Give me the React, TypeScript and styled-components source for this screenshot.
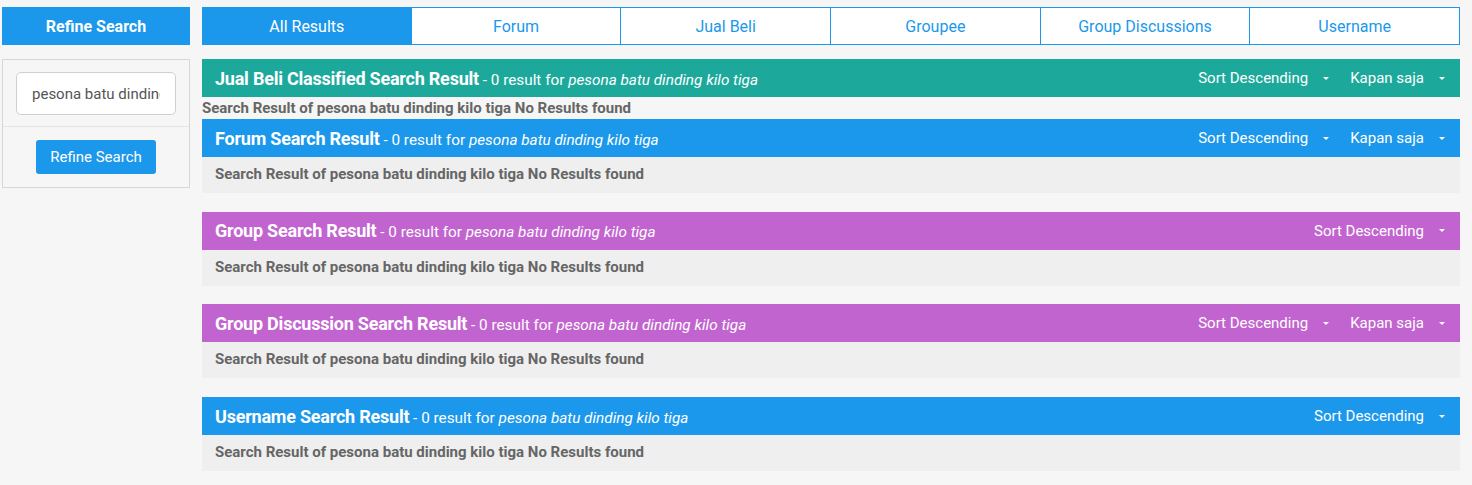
import React from 'react';
import styled, { createGlobalStyle } from 'styled-components';

const GlobalStyle = createGlobalStyle`
  body {
    margin: 0;
    background: #f6f6f6;
    font-family: Roboto, 'Liberation Sans', sans-serif;
  }
`;

const BLUE = '#1b98eb';
const TEAL = '#1ca99c';
const PURPLE = '#c264cf';

const Page = styled.div`
  display: flex;
  gap: 12px;
  padding: 7px 12px 0 2px;
  align-items: flex-start;
`;

const Sidebar = styled.aside`
  width: 188px;
  flex: none;
  display: flex;
  flex-direction: column;
  gap: 14px;
`;

const SideTitle = styled.div`
  height: 38px;
  background: ${BLUE};
  color: #fff;
  font-weight: 700;
  font-size: 16px;
  display: flex;
  align-items: center;
  justify-content: center;
`;

const SideBox = styled.div`
  border: 1px solid #d6d6d6;
  background: #f6f6f6;
`;

const SideField = styled.div`
  padding: 12px 13px 11px;
  border-bottom: 1px solid #e4e4e4;
`;

const SearchInput = styled.input`
  box-sizing: border-box;
  width: 160px;
  height: 43px;
  border: 1px solid #cfcfcf;
  border-radius: 5px;
  background: #fff;
  padding: 0 15px;
  font-family: Roboto, 'Liberation Sans', sans-serif;
  font-size: 15px;
  color: #555;
  outline: none;
`;

const SideAction = styled.div`
  display: flex;
  justify-content: center;
  padding: 13px 0 13px;
`;

const BlueButton = styled.button`
  height: 34px;
  padding: 0 14px;
  border: none;
  border-radius: 3px;
  background: ${BLUE};
  color: #fff;
  font-family: Roboto, 'Liberation Sans', sans-serif;
  font-size: 15px;
  cursor: pointer;
`;

const Main = styled.main`
  flex: 1;
  display: flex;
  flex-direction: column;
`;

const Tabs = styled.nav`
  display: grid;
  grid-template-columns: repeat(6, 1fr);
  margin-bottom: 14px;
`;

const Tab = styled.div<{ $active?: boolean }>`
  height: 38px;
  box-sizing: border-box;
  border: 1px solid ${BLUE};
  border-left-width: ${({ $active }) => ($active ? 1 : 0)}px;
  background: ${({ $active }) => ($active ? BLUE : '#fff')};
  color: ${({ $active }) => ($active ? '#fff' : BLUE)};
  font-size: 16px;
  display: flex;
  align-items: center;
  justify-content: center;
`;

const Section = styled.section<{ $flush?: boolean }>`
  margin-bottom: ${({ $flush }) => ($flush ? '0' : '18.7px')};
`;

const Header = styled.div<{ $color: string }>`
  height: 38px;
  background: ${({ $color }) => $color};
  color: #fff;
  display: flex;
  align-items: center;
  padding-left: 13px;
`;

const Title = styled.div`
  flex: 1;
  font-size: 15.3px;
  white-space: nowrap;
  b {
    font-size: 18px;
    font-weight: 700;
    letter-spacing: -0.22px;
  }
  i {
    font-style: italic;
  }
`;

const Dropdown = styled.div`
  display: flex;
  align-items: center;
  padding: 0 15px 0 6px;
  font-size: 15px;
  white-space: nowrap;
`;

const Caret = styled.span`
  width: 0;
  height: 0;
  margin-left: 15px;
  border-left: 3px solid transparent;
  border-right: 3px solid transparent;
  border-top: 3px solid #fff;
`;

const Body = styled.div<{ $plain?: boolean }>`
  background: ${({ $plain }) => ($plain ? 'transparent' : '#efefef')};
  padding: ${({ $plain }) => ($plain ? '3px 0 2px' : '9px 13px 10px')};
  font-size: 15px;
  font-weight: 700;
  color: #666;
  line-height: 17px;
`;

const query = 'pesona batu dinding kilo tiga';

const sections = [
  { title: 'Jual Beli Classified Search Result', color: TEAL, time: true, plain: true },
  { title: 'Forum Search Result', color: BLUE, time: true },
  { title: 'Group Search Result', color: PURPLE, time: false },
  { title: 'Group Discussion Search Result', color: PURPLE, time: true },
  { title: 'Username Search Result', color: BLUE, time: false },
];

const tabs = ['All Results', 'Forum', 'Jual Beli', 'Groupee', 'Group Discussions', 'Username'];

export default function App() {
  return (
    <>
      <GlobalStyle />
      <Page>
        <Sidebar>
          <SideTitle>Refine Search</SideTitle>
          <SideBox>
            <SideField>
              <SearchInput defaultValue={query} />
            </SideField>
            <SideAction>
              <BlueButton>Refine Search</BlueButton>
            </SideAction>
          </SideBox>
        </Sidebar>
        <Main>
          <Tabs>
            {tabs.map((t, i) => (
              <Tab key={t} $active={i === 0}>
                {t}
              </Tab>
            ))}
          </Tabs>
          {sections.map((s) => (
            <Section key={s.title} $flush={s.plain}>
              <Header $color={s.color}>
                <Title>
                  <b>{s.title}</b> - 0 result for <i>{query}</i>
                </Title>
                <Dropdown>
                  Sort Descending
                  <Caret />
                </Dropdown>
                {s.time && (
                  <Dropdown>
                    Kapan saja
                    <Caret />
                  </Dropdown>
                )}
              </Header>
              <Body $plain={s.plain}>Search Result of {query} No Results found</Body>
            </Section>
          ))}
        </Main>
      </Page>
    </>
  );
}
